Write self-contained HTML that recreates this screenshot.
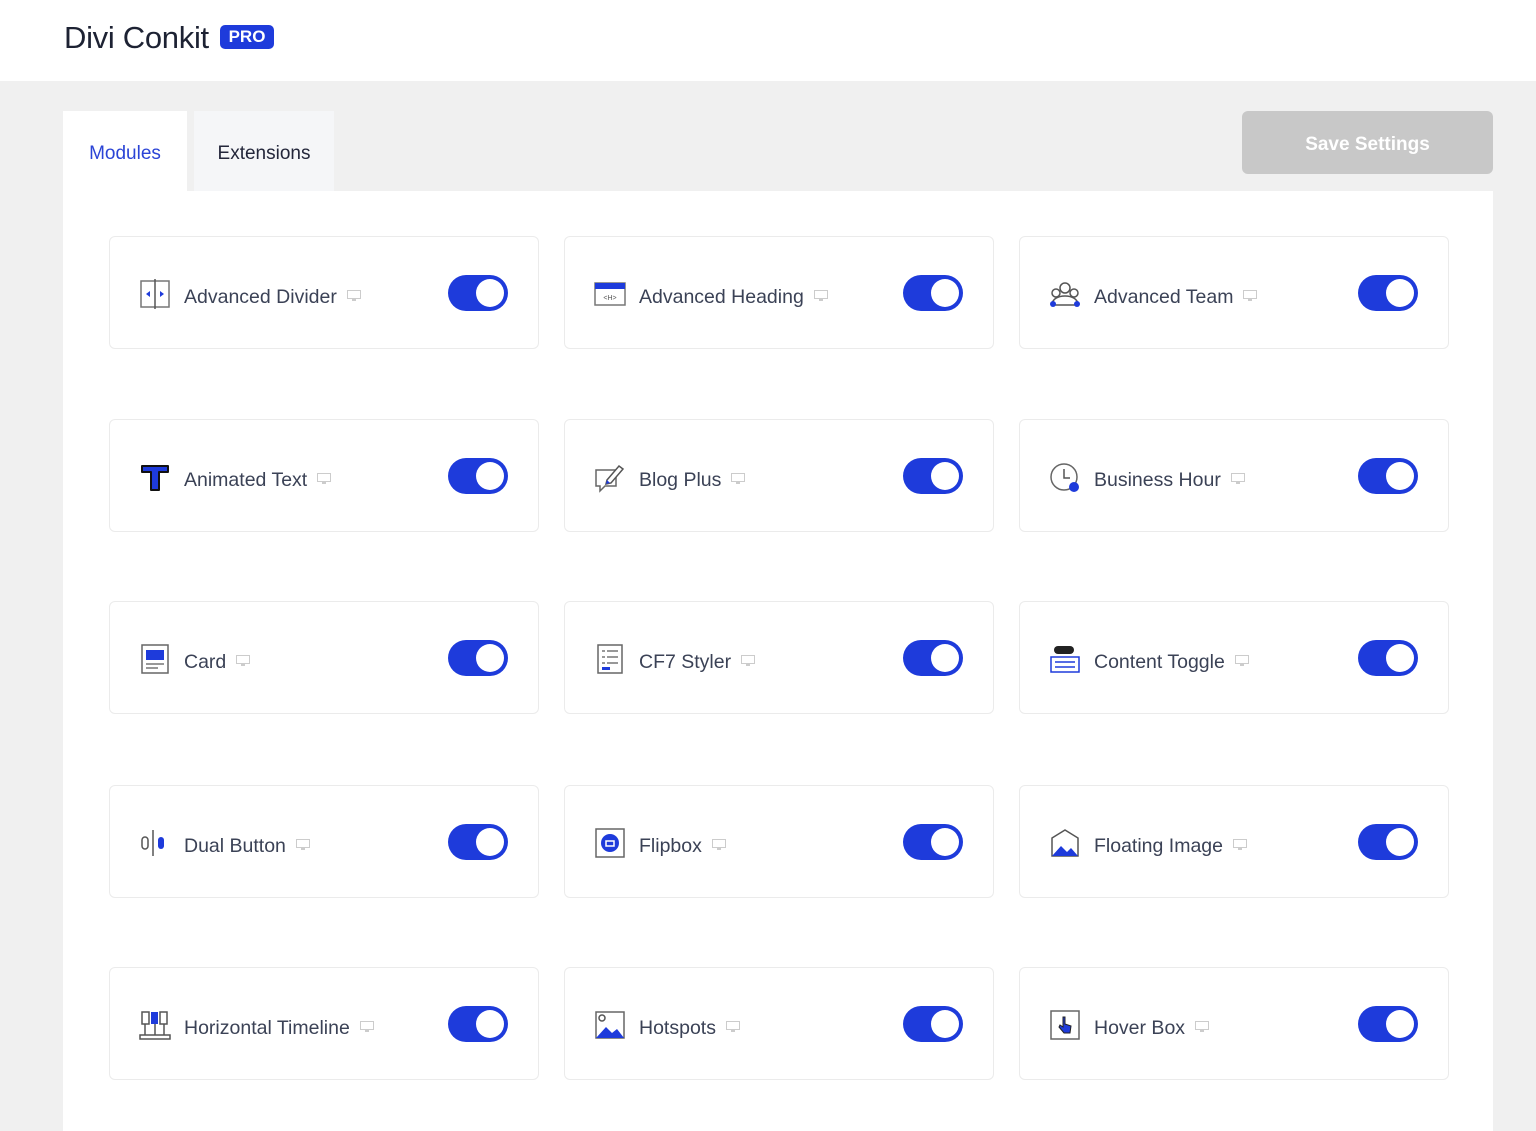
<!DOCTYPE html>
<html><head><meta charset="utf-8"><style>
*{box-sizing:border-box;margin:0;padding:0}
body{width:1536px;height:1120px;background:#f0f0f0;font-family:"Liberation Sans",sans-serif;position:relative;overflow:hidden}
.hdr{position:absolute;left:0;top:0;width:1536px;height:81px;background:#fff}
.logo{position:absolute;left:64px;top:20px;font-size:31px;color:#1d2233;letter-spacing:-0.3px}
.pro{position:absolute;left:220px;top:25px;width:54px;height:24px;background:#1e3bdb;color:#fff;border-radius:5px;font-size:17px;font-weight:bold;text-align:center;line-height:24px}
.tab{position:absolute;top:111px;height:81px;font-size:19px;text-align:center;line-height:86px}
.t1{left:63px;width:124px;background:#fff;color:#2b44d6}
.t2{left:194px;width:140px;background:#f5f6f8;color:#23263a}
.save{position:absolute;left:1242px;top:111px;width:251px;height:63px;background:#c8c8c8;border-radius:6px;color:#fff;font-weight:bold;font-size:19px;text-align:center;line-height:68px}
.panel{position:absolute;left:63px;top:191px;width:1430px;height:940px;background:#fff}
.card{position:absolute;width:430px;height:113px;border:1.5px solid #ebebeb;border-radius:6px;background:#fff}
.ic{position:absolute;left:28px;top:40px;width:34px;height:34px}
.lb{position:absolute;left:74px;top:49px;font-size:19.5px;color:#3b4256;white-space:nowrap}
.lb svg{vertical-align:middle;margin-left:10px;margin-top:-3px}
.tg{position:absolute;left:338px;top:38px;width:60px;height:36px;border-radius:18px;background:#1e3bdb}
.tg::after{content:"";position:absolute;right:4px;top:4px;width:28px;height:28px;border-radius:50%;background:#fff}
</style></head><body>
<div class="hdr"><div class="logo">Divi Conkit</div><div class="pro">PRO</div></div>
<div class="tab t1">Modules</div><div class="tab t2">Extensions</div>
<div class="save">Save Settings</div>
<div class="panel"></div>
<svg width="0" height="0" style="position:absolute"><defs>
<symbol id="mon" viewBox="0 0 14 12"><rect x="0.5" y="0.5" width="13" height="8" fill="none" stroke="#ccc"/><rect x="5" y="9" width="4" height="2" fill="#ccc"/></symbol>
</defs></svg>
<script>
const items=[
["Advanced Divider",'<rect x="3" y="4" width="28" height="26" fill="none" stroke="#777" stroke-width="1.5"/><line x1="17" y1="2" x2="17" y2="32" stroke="#555" stroke-width="1.5"/><path d="M12 14l-4 3 4 3z M22 14l4 3-4 3z" fill="#1e3bdb"/>'],
["Advanced Heading",'<rect x="2" y="6" width="30" height="22" fill="none" stroke="#777" stroke-width="1.5"/><rect x="2" y="6" width="30" height="6" fill="#1e3bdb"/><text x="17" y="23" font-size="7" text-anchor="middle" fill="#555">&lt;H&gt;</text>'],
["Advanced Team",'<circle cx="17" cy="11" r="5" fill="none" stroke="#555" stroke-width="1.5"/><circle cx="8" cy="16" r="4" fill="none" stroke="#555" stroke-width="1.5"/><circle cx="26" cy="16" r="4" fill="none" stroke="#555" stroke-width="1.5"/><path d="M4 28c0-6 6-9 13-9s13 3 13 9z" fill="none" stroke="#555" stroke-width="1.5"/><circle cx="5" cy="27" r="3" fill="#1e3bdb"/><circle cx="29" cy="27" r="3" fill="#1e3bdb"/>'],
["Animated Text",'<path d="M4 6h26v6h-9v18h-8V12H4z" fill="#1e3bdb" stroke="#111" stroke-width="2" stroke-linejoin="round"/>'],
["Blog Plus",'<path d="M3 10h20v16H12l-5 5v-5H3z" fill="none" stroke="#666" stroke-width="1.5"/><path d="M14 20l12-14 4 3-12 14-5 1z" fill="#fff" stroke="#555" stroke-width="1.5"/><path d="M14 20l-1 4 4-1z" fill="#1e3bdb"/>'],
["Business Hour",'<circle cx="16" cy="17" r="13" fill="none" stroke="#666" stroke-width="1.5"/><path d="M16 9v9h6" fill="none" stroke="#555" stroke-width="1.5"/><circle cx="26" cy="27" r="5" fill="#1e3bdb"/>'],
["Card",'<rect x="4" y="3" width="26" height="28" fill="none" stroke="#666" stroke-width="1.5"/><rect x="8" y="8" width="18" height="10" fill="#1e3bdb"/><path d="M8 22h18M8 26h12" stroke="#777" stroke-width="1.5"/>'],
["CF7 Styler",'<rect x="5" y="3" width="24" height="28" fill="none" stroke="#666" stroke-width="1.5"/><path d="M9 9h3M14 9h11M9 15h3M14 15h11M9 21h3M14 21h11" stroke="#777" stroke-width="1.5"/><rect x="9" y="25" width="8" height="3" fill="#1e3bdb"/>'],
["Content Toggle",'<rect x="6" y="4" width="20" height="8" rx="4" fill="#222"/><rect x="3" y="15" width="28" height="15" fill="none" stroke="#1e3bdb" stroke-width="1.5"/><path d="M7 20h20M7 25h20" stroke="#1e3bdb" stroke-width="1.5"/>'],
["Dual Button",'<rect x="4" y="11" width="6" height="12" rx="3" fill="none" stroke="#555" stroke-width="1.5"/><line x1="15" y1="4" x2="15" y2="30" stroke="#555" stroke-width="1.5"/><rect x="20" y="11" width="6" height="12" rx="3" fill="#1e3bdb"/>'],
["Flipbox",'<rect x="3" y="3" width="28" height="28" fill="none" stroke="#666" stroke-width="1.5"/><circle cx="17" cy="17" r="9" fill="#1e3bdb"/><path d="M13 15h8v5h-8z" fill="none" stroke="#fff" stroke-width="1.5"/>'],
["Floating Image",'<path d="M4 12l13-8 13 8v18H4z" fill="none" stroke="#555" stroke-width="1.5"/><path d="M4 30l9-10 6 6 4-4 7 8z" fill="#1e3bdb"/>'],
["Horizontal Timeline",'<path d="M2 27h30v4H2z" fill="none" stroke="#555" stroke-width="1.5"/><rect x="4" y="4" width="7" height="12" fill="none" stroke="#555" stroke-width="1.5"/><rect x="13" y="4" width="7" height="12" fill="#1e3bdb"/><rect x="22" y="4" width="7" height="12" fill="none" stroke="#555" stroke-width="1.5"/><path d="M7 16v11M17 16v11M26 16v11" stroke="#555" stroke-width="1.5"/>'],
["Hotspots",'<rect x="3" y="4" width="28" height="26" fill="none" stroke="#666" stroke-width="1.5"/><path d="M3 30l10-11 6 6 5-4 7 9z" fill="#1e3bdb"/><circle cx="9" cy="10" r="3" fill="none" stroke="#555" stroke-width="1.5"/>'],
["Hover Box",'<rect x="3" y="3" width="28" height="28" fill="none" stroke="#666" stroke-width="1.5"/><path d="M15 9v10l-3-2-1 2 5 6h6l1-7-6-2V9z" fill="#1e3bdb" stroke="#222" stroke-width="1"/>']
];
const xs=[109,564,1019], ys=[236,419,601,785,967];
let h='';
items.forEach((it,i)=>{
 const x=xs[i%3], y=ys[Math.floor(i/3)];
 h+=`<div class="card" style="left:${x}px;top:${y}px"><svg class="ic" viewBox="0 0 34 34">${it[1]}</svg><div class="lb">${it[0]}<svg width="14" height="12"><use href="#mon"/></svg></div><div class="tg"></div></div>`;
});
document.body.insertAdjacentHTML('beforeend',h);
</script>
</body></html>
